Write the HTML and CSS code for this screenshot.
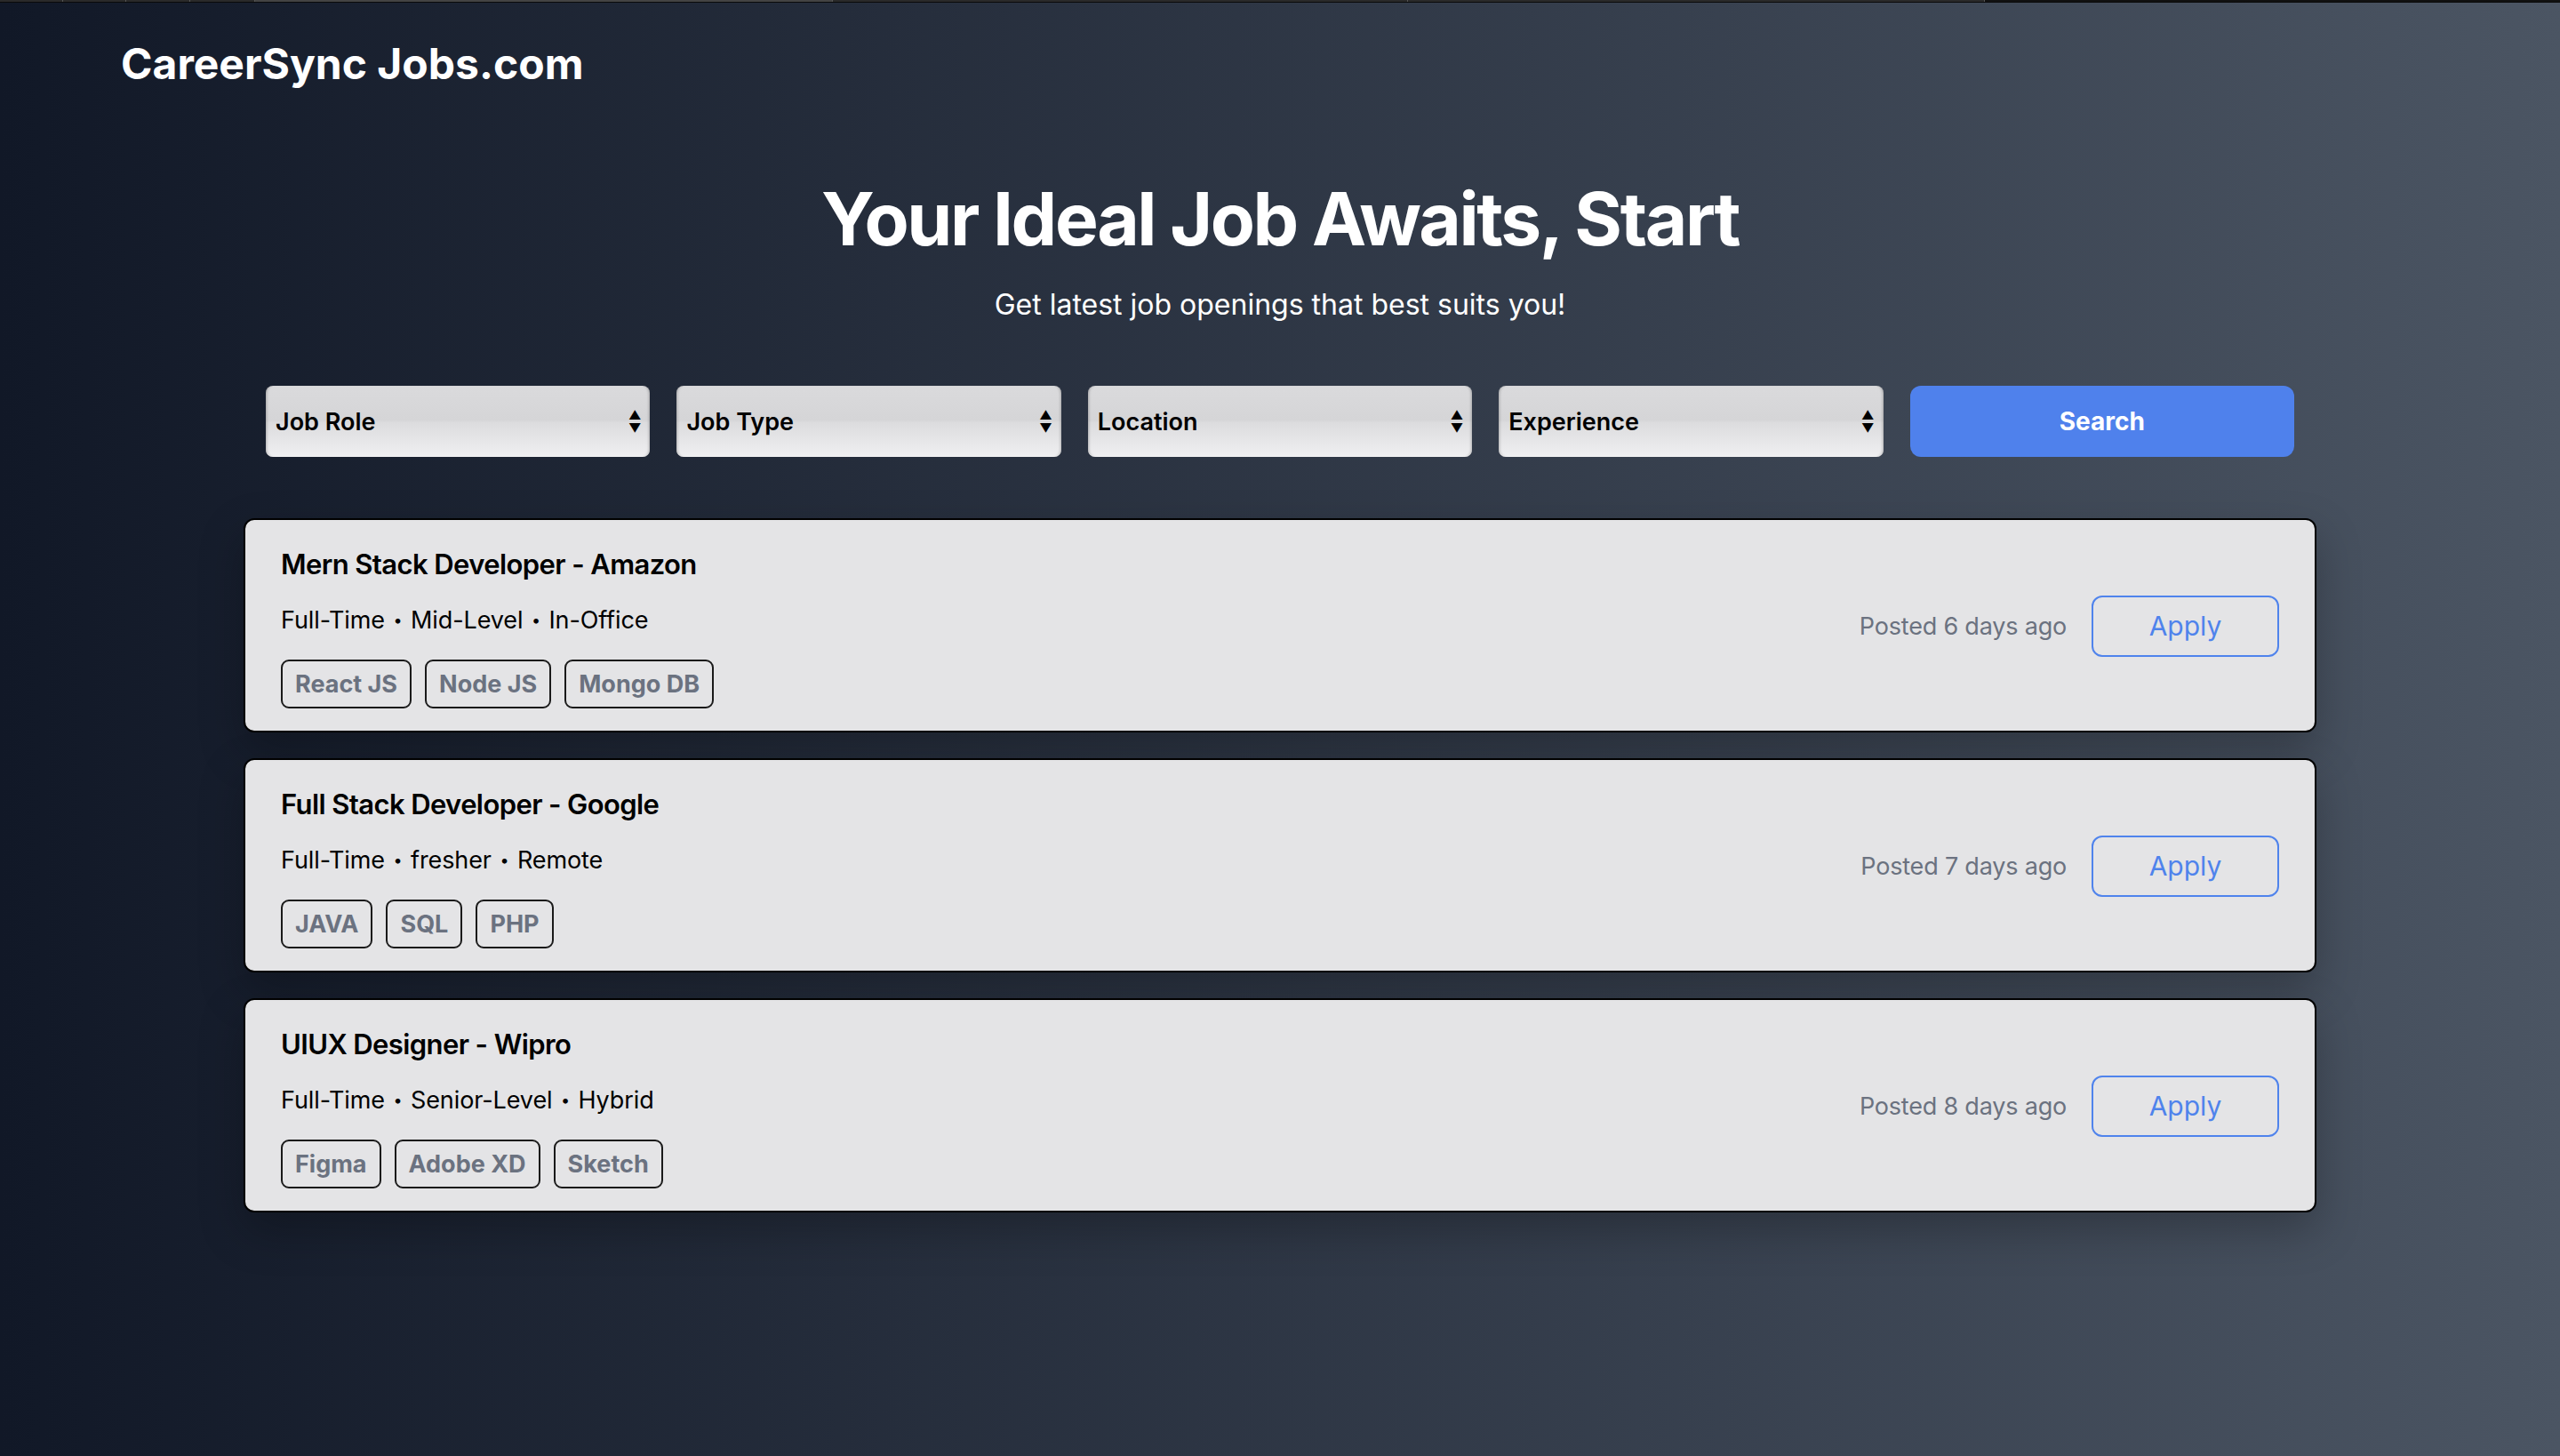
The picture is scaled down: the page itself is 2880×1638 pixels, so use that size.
FILE: index.html
```html
<!DOCTYPE html>
<html lang="en">
<head>
<meta charset="utf-8">
<title>CareerSync Jobs.com</title>
<link rel="stylesheet" href="styles.css">
</head>
<body>
<div class="topstrip">
  <span class="seg s1"></span><span class="seg s2"></span><span class="seg s3"></span><span class="seg s4"></span><span class="seg s5"></span><span class="seg s6"></span><span class="seg s7"></span>
</div>
<header class="site-header">
  <div class="logo">CareerSync Jobs.com</div>
</header>
<main class="main">
  <section class="hero">
    <h1 class="hero-title">Your Ideal Job Awaits, Start</h1>
    <p class="hero-sub">Get latest job openings that best suits you!</p>
  </section>
  <div class="filters">
    <div class="select"><span>Job Role</span><span class="arrows">▲<br>▼</span></div>
    <div class="select"><span>Job Type</span><span class="arrows">▲<br>▼</span></div>
    <div class="select"><span>Location</span><span class="arrows">▲<br>▼</span></div>
    <div class="select"><span>Experience</span><span class="arrows">▲<br>▼</span></div>
    <button class="search-btn">Search</button>
  </div>
  <div class="jobs">
    <article class="card">
      <div class="card-left">
        <h2 class="job-title">Mern Stack Developer - Amazon</h2>
        <div class="job-meta">Full-Time <span class="dot">•</span> Mid-Level <span class="dot">•</span> In-Office</div>
        <div class="tags"><span class="tag">React JS</span><span class="tag">Node JS</span><span class="tag">Mongo DB</span></div>
      </div>
      <div class="card-right">
        <span class="posted">Posted 6 days ago</span>
        <button class="apply">Apply</button>
      </div>
    </article>
    <article class="card">
      <div class="card-left">
        <h2 class="job-title">Full Stack Developer - Google</h2>
        <div class="job-meta">Full-Time <span class="dot">•</span> fresher <span class="dot">•</span> Remote</div>
        <div class="tags"><span class="tag">JAVA</span><span class="tag">SQL</span><span class="tag">PHP</span></div>
      </div>
      <div class="card-right">
        <span class="posted">Posted 7 days ago</span>
        <button class="apply">Apply</button>
      </div>
    </article>
    <article class="card">
      <div class="card-left">
        <h2 class="job-title">UIUX Designer - Wipro</h2>
        <div class="job-meta">Full-Time <span class="dot">•</span> Senior-Level <span class="dot">•</span> Hybrid</div>
        <div class="tags"><span class="tag">Figma</span><span class="tag">Adobe XD</span><span class="tag">Sketch</span></div>
      </div>
      <div class="card-right">
        <span class="posted">Posted 8 days ago</span>
        <button class="apply">Apply</button>
      </div>
    </article>
  </div>
</main>
</body>
</html>
```
FILE: styles.css
```css
* { box-sizing: border-box; }
html, body { margin: 0; padding: 0; }
body {
  min-height: 1638px;
  font-family: Inter, "Noto Sans", "Liberation Sans", sans-serif;
  background: linear-gradient(to right, #111827, #4b5563);
  color: #fff;
}
.topstrip {
  height: 3px;
  display: flex;
  background: #111;
  border-bottom: 1px solid #0a0a0a;
}
.seg { height: 2px; background: #2a2a2a; border-right: 1px solid #555; }
.s1 { width: 71px; } .s2 { width: 71px; } .s3 { width: 72px; } .s4 { width: 73px; }
.s5 { width: 650px; background: #444; }
.s6 { width: 647px; background: #2a2a2a; }
.s7 { width: 649px; background: #2a2a2a; }
.site-header { padding: 40px 0 0 136px; }
.logo { font-size: 48px; font-weight: 700; line-height: 58px; letter-spacing: 0; }
.main { display: flex; flex-direction: column; align-items: center; }
.hero { text-align: center; margin-top: 93px; }
.hero-title { margin: 0; font-size: 82px; font-weight: 700; line-height: 106px; letter-spacing: -2.4px; }
.hero-sub { margin: 21px 0 0; font-size: 32px; line-height: 44px; font-weight: 400; }
.filters {
  margin-top: 69px;
  width: 2282px;
  display: grid;
  grid-template-columns: repeat(5, 1fr);
  gap: 30px;
}
.select {
  height: 80px;
  border-radius: 8px;
  background: linear-gradient(to bottom, #dadadc 0%, #d5d5d7 48%, #dcdcde 52%, #efeff1 100%);
  box-shadow: inset 3px 0 3px -2px rgba(0,0,0,.25), inset -3px 0 3px -2px rgba(0,0,0,.25), inset 0 -1px 1px rgba(255,255,255,.6);
  color: #000;
  font-size: 27px;
  font-weight: 600;
  display: flex;
  align-items: center;
  justify-content: space-between;
  padding: 0 10px 0 11px;
}
.arrows { font-size: 14px; line-height: 15px; text-align: center; }
.search-btn {
  height: 80px;
  border: none;
  border-radius: 12px;
  background: #4f81ec;
  color: #fff;
  font-family: inherit;
  font-size: 28px;
  font-weight: 700;
}
.jobs { margin-top: 69px; width: 2332px; display: flex; flex-direction: column; gap: 29px; }
.card {
  background: #e4e4e6;
  border: 2px solid #000;
  border-radius: 12px;
  padding: 26px 40px 25px;
  display: flex;
  justify-content: space-between;
  align-items: center;
  color: #000;
  box-shadow: 0 20px 50px rgba(0,0,0,.25);
}
.job-title { margin: 0; font-size: 31px; font-weight: 600; line-height: 48px; letter-spacing: -0.6px; }
.job-meta { margin-top: 19px; font-size: 27px; line-height: 40px; letter-spacing: -0.1px; }
.dot { font-size: 18px; margin: 0 2px; position: relative; top: -3px; }
.tags { margin-top: 21px; display: flex; gap: 15px; }
.tag {
  border: 2px solid #1a1a1a;
  border-radius: 9px;
  padding: 6px 14px;
  line-height: 39px;
  font-size: 27px;
  font-weight: 700;
  color: #6b7280;
  letter-spacing: 0;
}
.card-right { display: flex; align-items: center; gap: 28px; }
.posted { font-size: 27px; color: #6b7280; letter-spacing: -0.2px; }
.apply {
  width: 211px;
  height: 69px;
  border: 2px solid #4f83ec;
  border-radius: 12px;
  background: transparent;
  color: #4f83ec;
  font-family: inherit;
  font-size: 30px;
}
```
